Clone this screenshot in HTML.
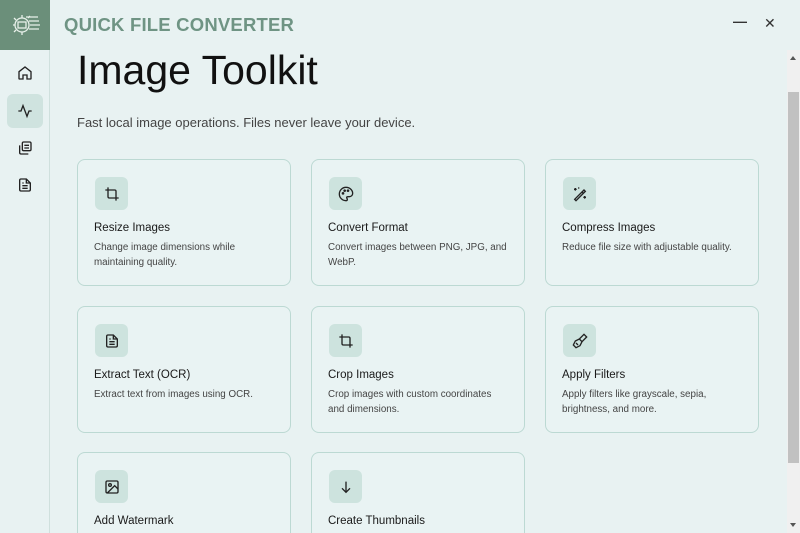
<!DOCTYPE html>
<html style="width:800px;height:533px;overflow:hidden"><head><style>
*{margin:0;padding:0;box-sizing:border-box}
body{width:800px;height:533px;overflow:hidden;background:#e8f2f2;font-family:"Liberation Sans",sans-serif;position:relative;color:#1a1a1a}
.logo{position:absolute;left:0;top:0;width:50px;height:50px;background:#6b8f7a;display:flex;align-items:center;justify-content:center}
.side{position:absolute;left:0;top:50px;width:50px;height:483px;border-right:1px solid #cfe0dd}
.nav{position:absolute;left:7px;width:36px;height:34px;border-radius:6px;display:flex;align-items:center;justify-content:center}
.nav.act{background:#cfe3df}
.brand{position:absolute;left:64px;top:14px;font-size:18.5px;font-weight:bold;color:#6f9484;letter-spacing:0.2px}
.win{position:absolute;top:17px;font-size:14px;color:#333}
h1{position:absolute;left:77px;top:47px;font-size:41px;font-weight:normal;color:#111}
.sub{position:absolute;left:77px;top:115px;font-size:13px;color:#444}
.card{position:absolute;width:214px;height:127px;border:1px solid #bcd9d3;border-radius:8px;background:#e9f3f3}
.card.last{height:81px;border-bottom:none;border-bottom-left-radius:0;border-bottom-right-radius:0}
.ic{position:absolute;left:17px;top:17px;width:33px;height:33px;border-radius:6px;background:#cde3de;display:flex;align-items:center;justify-content:center}
.t{position:absolute;left:16px;top:62px;font-size:11.5px;color:#1a1a1a}
.d{position:absolute;left:16px;top:80px;width:182px;font-size:9.8px;line-height:15px;color:#444}
.sb{position:absolute;left:787px;top:50px;width:13px;height:483px;background:#f0f0f0}
.th{position:absolute;left:788px;top:92px;width:11px;height:371px;background:#c1c1c1}
svg{display:block}
</style></head><body>
<div class="logo"><svg width="32" height="32" viewBox="0 0 32 32" fill="none" stroke="#e8f0ea" stroke-width="1.3"><circle cx="13" cy="16" r="7"/><path d="M13 6v3M13 23v3M4 16h2M5 9l2 2M5 23l2-2M19 9l2-2M21 16h10M20 12h10M20 20h10M17 8h12"/><rect x="9" y="13" width="8" height="6"/></svg></div>
<div class="side">
<div class="nav" style="top:6px"><svg width="16" height="16" viewBox="0 0 24 24" fill="none" stroke="#222" stroke-width="2"><path d="M3 10l9-7 9 7v10a1 1 0 0 1-1 1h-5v-6h-6v6H4a1 1 0 0 1-1-1z"/></svg></div>
<div class="nav act" style="top:44px"><svg width="16" height="16" viewBox="0 0 24 24" fill="none" stroke="#222" stroke-width="2"><path d="M2 12h4l3-8 6 16 3-8h4"/></svg></div>
<div class="nav" style="top:81px"><svg width="16" height="16" viewBox="0 0 24 24" fill="none" stroke="#222" stroke-width="2"><rect x="8" y="3" width="13" height="13" rx="2"/><path d="M4 8v11a2 2 0 0 0 2 2h11M11 8h7M11 12h7"/></svg></div>
<div class="nav" style="top:118px"><svg width="16" height="16" viewBox="0 0 24 24" fill="none" stroke="#222" stroke-width="2"><path d="M14 3H6a2 2 0 0 0-2 2v14a2 2 0 0 0 2 2h12a2 2 0 0 0 2-2V9z"/><path d="M14 3v6h6M8 13h8M8 17h8M8 9h2"/></svg></div>
</div>
<div class="brand">QUICK FILE CONVERTER</div>
<div class="win" style="left:733px;top:13px;font-weight:bold">—</div>
<div class="win" style="left:764px;top:15px">✕</div>
<h1>Image Toolkit</h1>
<div class="sub">Fast local image operations. Files never leave your device.</div>

<div class="card" style="left:77px;top:159px"><div class="ic"><svg width="16" height="16" viewBox="0 0 24 24" fill="none" stroke="#222" stroke-width="2"><path d="M6 2v14a2 2 0 0 0 2 2h14M18 22V8a2 2 0 0 0-2-2H2"/></svg></div><div class="t">Resize Images</div><div class="d">Change image dimensions while maintaining quality.</div></div>
<div class="card" style="left:311px;top:159px"><div class="ic"><svg width="16" height="16" viewBox="0 0 24 24" fill="none" stroke="#222" stroke-width="2"><path d="M12 2a10 10 0 0 0 0 20c1.5 0 2-1 2-2s-1-1.5-1-2.5 1-1.5 2-1.5h2a5 5 0 0 0 5-5c0-5-4.5-9-10-9z"/><circle cx="7.5" cy="11" r="1"/><circle cx="10" cy="7" r="1"/><circle cx="15" cy="7" r="1"/></svg></div><div class="t">Convert Format</div><div class="d">Convert images between PNG, JPG, and<br>WebP.</div></div>
<div class="card" style="left:545px;top:159px"><div class="ic"><svg width="16" height="16" viewBox="0 0 24 24" fill="none" stroke="#222" stroke-width="2"><path d="M4 20L18 6l2 2L6 22zM15 9l2 2M5 3v4M3 5h4M19 15v4M17 17h4M10 2v2M9 3h2"/></svg></div><div class="t">Compress Images</div><div class="d">Reduce file size with adjustable quality.</div></div>

<div class="card" style="left:77px;top:306px"><div class="ic"><svg width="16" height="16" viewBox="0 0 24 24" fill="none" stroke="#222" stroke-width="2"><path d="M14 3H6a2 2 0 0 0-2 2v14a2 2 0 0 0 2 2h12a2 2 0 0 0 2-2V9z"/><path d="M14 3v6h6M8 13h8M8 17h8M8 9h2"/></svg></div><div class="t">Extract Text (OCR)</div><div class="d">Extract text from images using OCR.</div></div>
<div class="card" style="left:311px;top:306px"><div class="ic"><svg width="16" height="16" viewBox="0 0 24 24" fill="none" stroke="#222" stroke-width="2"><path d="M6 2v14a2 2 0 0 0 2 2h14M18 22V8a2 2 0 0 0-2-2H2"/></svg></div><div class="t">Crop Images</div><div class="d">Crop images with custom coordinates<br>and dimensions.</div></div>
<div class="card" style="left:545px;top:306px"><div class="ic"><svg width="16" height="16" viewBox="0 0 24 24" fill="none" stroke="#222" stroke-width="2"><path d="M18 2l4 4-7 7-4-4zM11 9l-6 3-3 6 4 4 6-3 3-6M6 15l3 3"/></svg></div><div class="t">Apply Filters</div><div class="d">Apply filters like grayscale, sepia,<br>brightness, and more.</div></div>

<div class="card last" style="left:77px;top:452px"><div class="ic"><svg width="16" height="16" viewBox="0 0 24 24" fill="none" stroke="#222" stroke-width="2"><rect x="3" y="3" width="18" height="18" rx="2"/><circle cx="9" cy="9" r="2"/><path d="M21 15l-5-5L5 21"/></svg></div><div class="t">Add Watermark</div></div>
<div class="card last" style="left:311px;top:452px"><div class="ic"><svg width="16" height="16" viewBox="0 0 24 24" fill="none" stroke="#222" stroke-width="2"><path d="M12 4v16M6 14l6 6 6-6"/></svg></div><div class="t">Create Thumbnails</div></div>

<div class="sb"></div><div class="th"></div>
<div style="position:absolute;left:790px;top:56px;width:0;height:0;border:3px solid transparent;border-bottom:4px solid #555;border-top:0"></div>
<div style="position:absolute;left:790px;top:523px;width:0;height:0;border:3px solid transparent;border-top:4px solid #555;border-bottom:0"></div>
</body></html>
